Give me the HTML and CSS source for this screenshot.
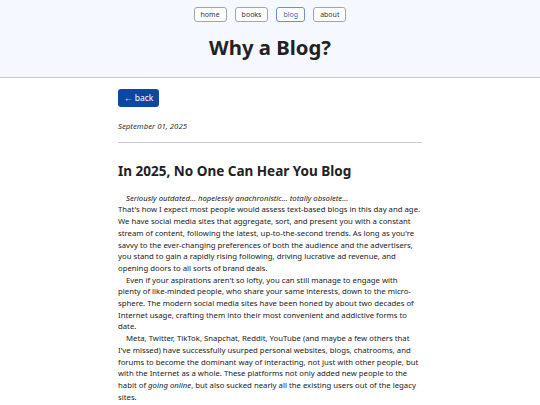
FILE: index.html
```html
<!DOCTYPE html>
<html>
<head>
    <title>Why a Blog?</title>
    <meta charset="utf-8">
    <meta name="viewport" content="width=device-width, initial-scale=1">
    <link rel="stylesheet" href="styles.css">
</head>
<body>
    <div class="header">
        <div class="nav">
            <a class="nav-btn" href="#">home</a>
            <a class="nav-btn" href="#">books</a>
            <a class="nav-btn active" href="#">blog</a>
            <a class="nav-btn" href="#">about</a>
        </div>
        <h1>Why a Blog?</h1>
    </div>
    <div class="container">
        <a class="back" href="#">&larr; back</a>
        <div class="date">September 01, 2025</div>
        <hr>
        <h2>In 2025, No One Can Hear You Blog</h2>
        <p><em>Seriously outdated... hopelessly anachronistic... totally obsolete...</em><br>That's how I expect most people would assess text-based blogs in this day and age. We have social media sites that aggregate, sort, and present you with a constant stream of content, following the latest, up-to-the-second trends. As long as you're savvy to the ever-changing preferences of both the audience and the advertisers, you stand to gain a rapidly rising following, driving lucrative ad revenue, and opening doors to all sorts of brand deals.</p>
        <p>Even if your aspirations aren't so lofty, you can still manage to engage with plenty of like-minded people, who share your same interests, down to the micro-sphere. The modern social media sites have been honed by about two decades of Internet usage, crafting them into their most convenient and addictive forms to date.</p>
        <p>Meta, Twitter, TikTok, Snapchat, Reddit, YouTube (and maybe a few others that I've missed) have successfully usurped personal websites, blogs, chatrooms, and forums to become the dominant way of interacting, not just with other people, but with the Internet as a whole. These platforms not only added new people to the habit of <em>going online</em>, but also sucked nearly all the existing users out of the legacy sites.</p>
        <p>And so this blog is bound to sit in the <a href="#">Internet graveyard</a> of August 2025 and beyond.</p>
    </div>
</body>
</html>
```

FILE: styles.css
```css
* { margin: 0; padding: 0; box-sizing: border-box; }
body { font-family: "Noto Sans", sans-serif; font-size: 7.75px; line-height: 11.7px; color: #222; background: #fff; }
.header { background: #f5f8ff; border-bottom: 1px solid #c8c8d8; padding: 7px 0 0; height: 78px; text-align: center; }
.nav { display: flex; justify-content: center; gap: 8px; }
.nav-btn { display: block; height: 15px; padding: 0 6px; border: 1px solid #a0a4b0; border-radius: 3px; background: #fff; color: #333; font-size: 7px; line-height: 13px; text-decoration: none; }
.nav-btn.active { color: #3a66b8; border-color: #6f8fc8; }
h1 { font-size: 20.3px; line-height: 30px; margin-top: 10px; color: #222; }
.container { width: 304px; margin: 11px auto 0; }
.back { display: inline-block; background: #0d47a1; color: #fff; text-decoration: none; padding: 0 6px; height: 18px; line-height: 18px; border-radius: 3px; font-size: 8.5px; }
.date { font-style: italic; margin-top: 14px; font-size: 7.8px; color: #333; }
hr { border: none; border-top: 1px solid #c8c8d0; margin: 9px 0 0; }
h2 { font-size: 13.5px; line-height: 20px; margin: 18px 0 12px; }
p { text-indent: 8px; }
em { font-style: italic; }
p a { color: #1a5fb4; }
```
